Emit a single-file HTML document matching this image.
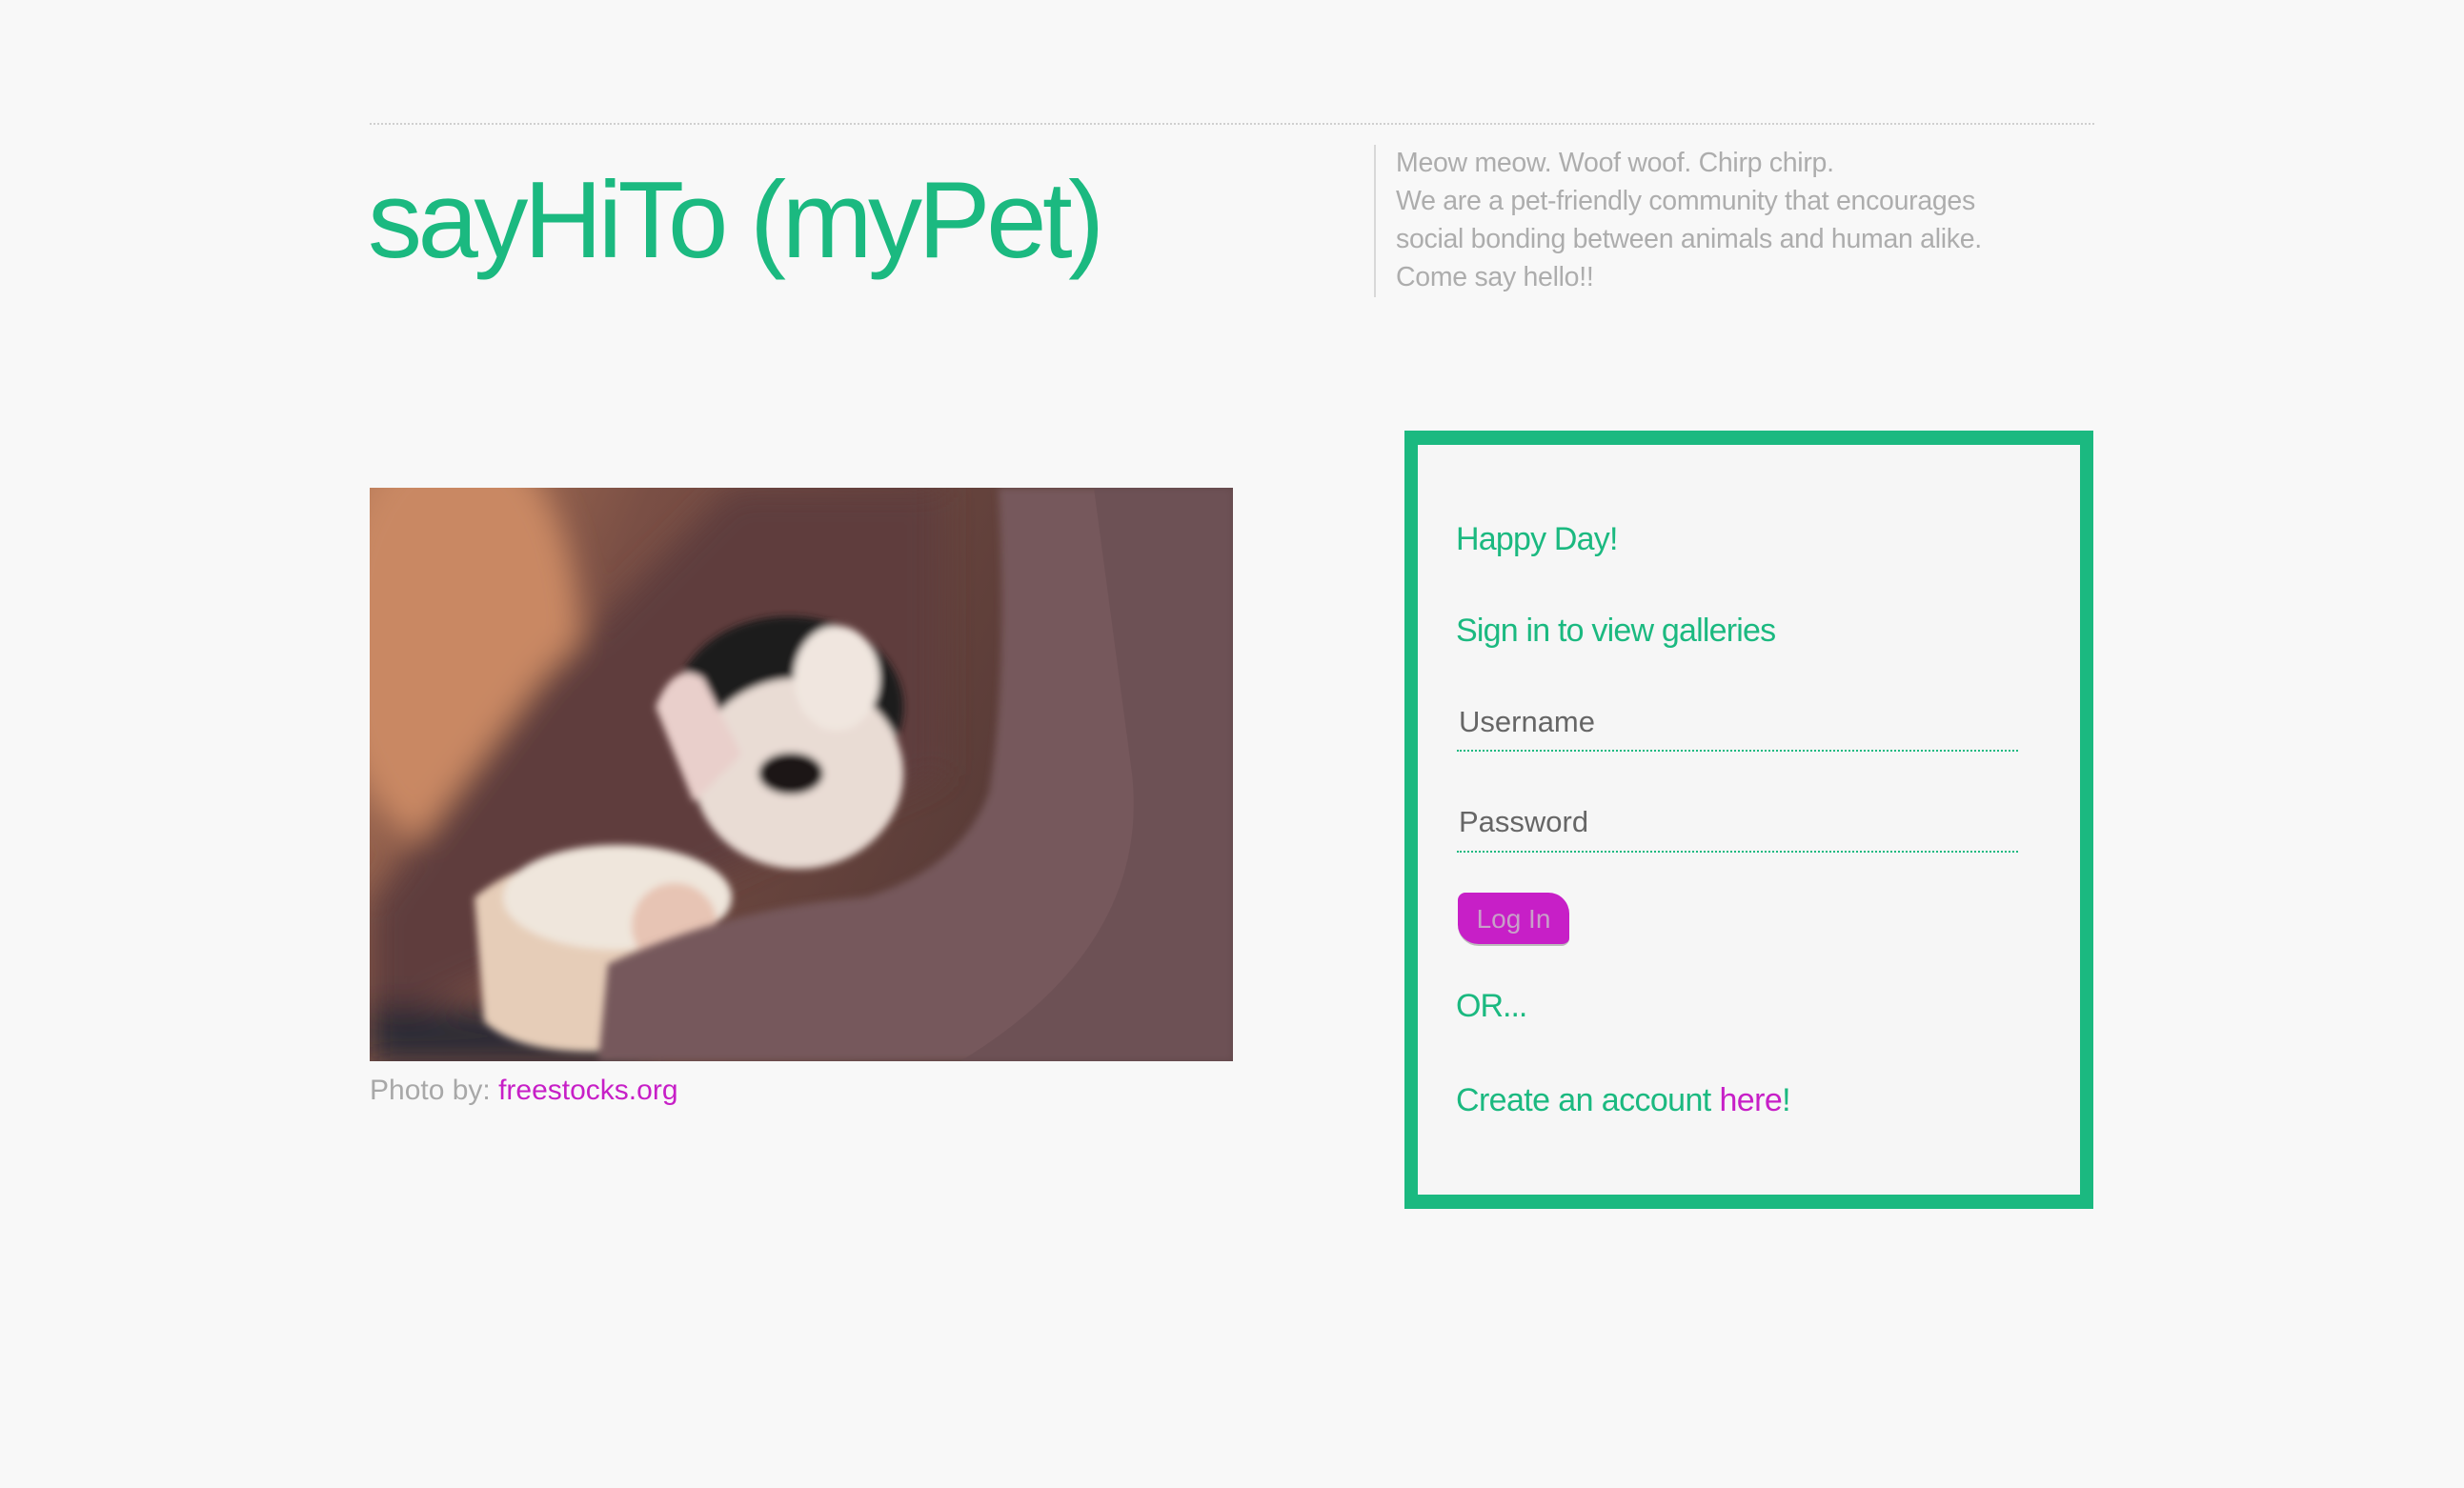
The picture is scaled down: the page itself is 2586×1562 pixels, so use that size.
<!DOCTYPE html>
<html><head><meta charset="utf-8"><style>
html,body{margin:0;padding:0}
body{width:2586px;height:1562px;background:#f8f8f8;position:relative;overflow:hidden;font-family:"Liberation Sans",sans-serif}
.a{position:absolute;white-space:nowrap}
.g{color:#1bb980}
</style></head><body>
<div class="a" style="left:388px;top:129px;width:1810px;border-top:2px dotted #cfcfcf"></div>
<div class="a g" style="left:386px;top:162px;font-size:114px;letter-spacing:-4.5px;line-height:140px">sayHiTo (myPet)</div>
<div class="a" style="left:1442px;top:152px;height:160px;border-left:2px solid #d8d8d8"></div>
<div class="a" style="left:1465px;top:151px;font-size:28.5px;line-height:40px;color:#adadad;letter-spacing:-0.3px">Meow meow. Woof woof. Chirp chirp.<br>We are a pet-friendly community that encourages<br>social bonding between animals and human alike.<br>Come say hello!!</div>

<svg class="a" style="left:388px;top:512px" width="906" height="602" viewBox="0 0 906 602">
<defs>
<linearGradient id="bg" x1="0" y1="0" x2="1" y2="0.3"><stop offset="0" stop-color="#b77a58"/><stop offset="0.3" stop-color="#7a4f45"/><stop offset="1" stop-color="#4e3533"/></linearGradient>
<filter id="bl"><feGaussianBlur stdDeviation="16"/></filter>
<filter id="b2"><feGaussianBlur stdDeviation="4"/></filter>
</defs>
<rect width="906" height="602" fill="url(#bg)"/>
<g filter="url(#bl)">
<ellipse cx="90" cy="160" rx="130" ry="220" fill="#c98864"/>
<path d="M0 440 L180 200 L380 0 L600 0 L600 300 L0 570Z" fill="#5e3e3c"/>
<path d="M0 540 L260 560 L300 602 L0 602Z" fill="#2a2a34"/>
</g>
<g filter="url(#b2)">
<path d="M110 430 Q170 380 260 390 L330 470 L280 590 Q160 600 120 560Z" fill="#e6cdb8"/>
<ellipse cx="260" cy="430" rx="120" ry="55" fill="#efe6dc"/>
<ellipse cx="440" cy="230" rx="120" ry="95" fill="#1e1b1e"/>
<ellipse cx="450" cy="300" rx="110" ry="100" fill="#e9dcd4"/>
<ellipse cx="490" cy="200" rx="45" ry="55" fill="#f0e6df"/>
<path d="M300 230 Q320 180 350 200 L390 280 L340 330Z" fill="#e9cfcb"/>
<ellipse cx="442" cy="300" rx="34" ry="22" fill="#1a1618"/>
<ellipse cx="320" cy="460" rx="45" ry="45" fill="#e7c4b4"/>
</g>
<path d="M660 0 L906 0 L906 602 L240 602 L250 500 Q380 440 520 430 Q620 400 650 320 Q670 200 660 0Z" fill="#76595b" filter="url(#b2)"/>
<path d="M760 0 L906 0 L906 602 L620 602 Q820 480 800 300Z" fill="#6a4f53" opacity="0.7"/>
</svg>

<div class="a" style="left:388px;top:1128px;font-size:30px;color:#a8a8a8">Photo by: <span style="color:#c71fc7">freestocks.org</span></div>

<div class="a" style="left:1474px;top:452px;width:695px;height:787px;border:14px solid #1bb980;border-top-width:15px;border-bottom-width:15px;background:#f6f6f6"></div>
<div class="a g" style="left:1528px;top:547px;font-size:34px;letter-spacing:-0.8px">Happy Day!</div>
<div class="a g" style="left:1528px;top:643px;font-size:34px;letter-spacing:-0.8px">Sign in to view galleries</div>
<div class="a" style="left:1531px;top:740px;font-size:31px;color:#666">Username</div>
<div class="a" style="left:1529px;top:787px;width:589px;border-top:2px dotted #1bb980"></div>
<div class="a" style="left:1531px;top:845px;font-size:31px;color:#666">Password</div>
<div class="a" style="left:1529px;top:893px;width:589px;border-top:2px dotted #1bb980"></div>
<div class="a" style="left:1530px;top:937px;width:117px;height:56px;background:#c71fc7;border-radius:8px 22px 8px 22px;border-bottom:2px solid #bbb;box-sizing:border-box;color:#c8a0c8;font-size:28px;line-height:56px;text-align:center">Log In</div>
<div class="a g" style="left:1528px;top:1037px;font-size:34px;letter-spacing:-1px">OR...</div>
<div class="a g" style="left:1528px;top:1136px;font-size:34px;letter-spacing:-0.6px">Create an account <span style="color:#c71fc7">here</span>!</div>
</body></html>
